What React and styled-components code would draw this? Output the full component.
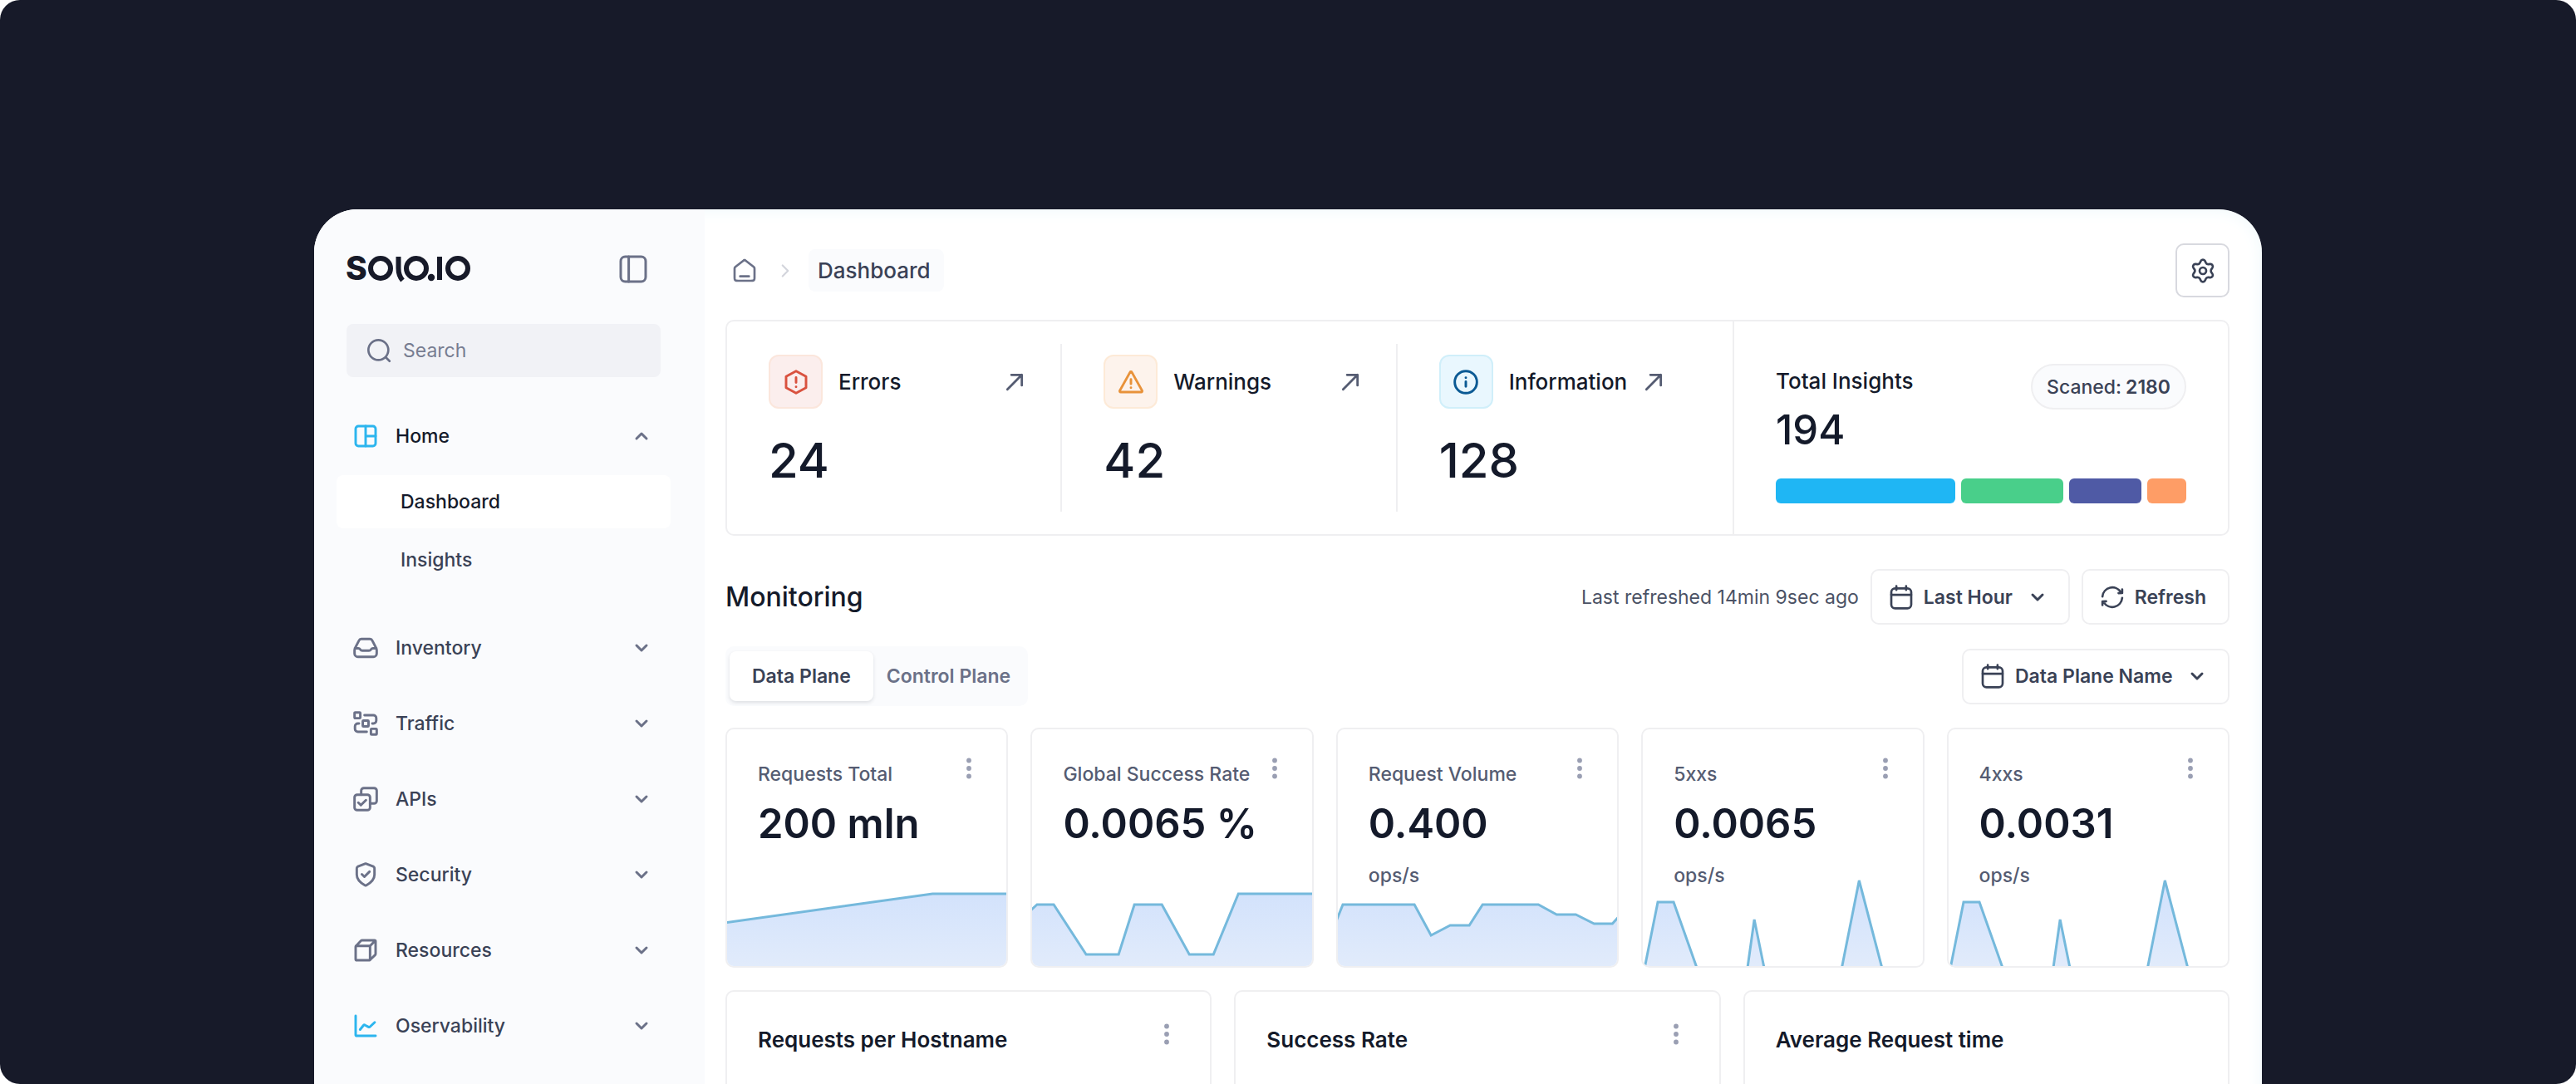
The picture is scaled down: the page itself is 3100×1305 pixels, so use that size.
import React, { useState } from "react"
import styled, { createGlobalStyle, css } from "styled-components"

const COLOR = {
  night: "#171a29",
  ink: "#141a2a",
  text: "#3a4256",
  soft: "#555c72",
  muted: "#6b7188",
  dots: "#9a9fb3",
  line: "#efeff1",
  side: "#fafbfd",
  brand: "#2cb5ee",
}

const GlobalStyle = createGlobalStyle`
  * {
    box-sizing: border-box;
  }

  html {
    background-color: #fff;
  }

  body {
    margin: 0;
    font-family: Inter, "Liberation Sans", sans-serif;
    font-size: 23px;
    color: ${COLOR.ink};
  }

  button,
  input,
  select {
    font: inherit;
    color: inherit;
    border: 0;
    background: none;
    padding: 0;
    margin: 0;
  }

  a {
    color: inherit;
    text-decoration: none;
  }

  h2,
  h3,
  p {
    margin: 0;
  }
`

/* ---------- icons ---------- */

const Svg = styled.svg`
  display: block;
  flex: none;
  width: ${props => props.$size || 32}px;
  height: ${props => props.$size || 32}px;
  fill: none;
  stroke: currentColor;
  stroke-width: ${props => props.$weight || 2};
  stroke-linecap: round;
  stroke-linejoin: round;
`

const ICONS = {
  panel: (
    <>
      <rect x="2" y="2" width="20" height="20" rx="3.6" />
      <path d="M8.4 2v20" />
    </>
  ),
  search: (
    <>
      <circle cx="11.5" cy="11.5" r="9" />
      <path d="M18.4 18.4L21.6 21.6" />
    </>
  ),
  home: (
    <>
      <rect x="3" y="3" width="18" height="18" rx="2.4" />
      <path d="M12 3v18M12 12h9" />
    </>
  ),
  inventory: (
    <path d="M8.1 4h7.8c1.1 0 1.7.4 2.1 1.3l3.2 6.2c.5 1 .8 1.6.8 2.6V17a3 3 0 01-3 3H5a3 3 0 01-3-3v-2.9c0-1 .3-1.6.8-2.6L6 5.3C6.4 4.4 7 4 8.1 4zM2.3 12.4h3c.8 0 1.4.3 1.8.9.5.8 1 1.2 1.9 1.2h6c.9 0 1.4-.4 1.9-1.2.4-.6 1-.9 1.8-.9h3" />
  ),
  traffic: (
    <>
      <rect x="2" y="2" width="5.2" height="5.2" rx=".6" />
      <rect x="9.4" y="9.4" width="5.2" height="5.2" rx=".6" />
      <rect x="16.8" y="16.8" width="5.2" height="5.2" rx=".6" />
      <path d="M11 4.5h8a2.6 2.6 0 012.6 2.6v2.3A2.6 2.6 0 0119 12h-1M13 19.5H5a2.6 2.6 0 01-2.6-2.6v-2.3A2.6 2.6 0 015 12h1" />
    </>
  ),
  apis: (
    <>
      <rect x="2" y="8" width="14" height="14" rx="2.4" />
      <path d="M8 8V4.4A2.4 2.4 0 0110.4 2h9.2A2.4 2.4 0 0122 4.4v9.2a2.4 2.4 0 01-2.4 2.4H16M5.4 15.2l2.3 2.3 4.6-4.6" />
    </>
  ),
  security: (
    <path d="M8.6 11.6l2.3 2.3 4.6-4.6M20 12c0 4.908-5.354 8.478-7.302 9.615-.221.129-.332.194-.488.227a1.137 1.137 0 01-.42 0c-.156-.033-.267-.098-.488-.227C9.354 20.478 4 16.908 4 12V7.218c0-.8 0-1.2.13-1.543a2 2 0 01.548-.79c.276-.242.65-.383 1.398-.663l5.362-2.01c.208-.079.312-.118.419-.133a1 1 0 01.286 0c.107.015.21.054.419.132l5.362 2.011c.748.28 1.123.42 1.398.663a2 2 0 01.547.79c.131.343.131.743.131 1.543V12z" />
  ),
  resources: (
    <>
      <rect x="3" y="8" width="13" height="13" rx="1" />
      <path d="M3.4 8L7.8 3.4a1.4 1.4 0 011-.4H20a1 1 0 011 1v11.2a1.4 1.4 0 01-.4 1L16 20.6M16 8l4.7-4.7" />
    </>
  ),
  chart: (
    <path d="M3 3v17a1 1 0 001 1h17M7 15.4l3-3.8a1.2 1.2 0 011.6-.2l3 1.6a1.2 1.2 0 001.4-.2l4.2-4" />
  ),
  down: <path d="M6 9l6 6 6-6" />,
  up: <path d="M18 15l-6-6-6 6" />,
  right: <path d="M9 18l6-6-6-6" />,
  house: (
    <path d="M8 17h8M11.018 2.764L4.235 8.039c-.453.353-.68.53-.843.75a2 2 0 00-.318.65C3 9.704 3 9.991 3 10.565V17.8c0 1.12 0 1.68.218 2.108a2 2 0 00.874.874C4.52 21 5.08 21 6.2 21h11.6c1.12 0 1.68 0 2.108-.218a2 2 0 00.874-.874C21 19.48 21 18.92 21 17.8v-7.235c0-.574 0-.861-.074-1.126a2 2 0 00-.318-.65c-.163-.22-.39-.397-.843-.75l-6.783-5.275c-.351-.273-.527-.41-.72-.462a1 1 0 00-.523 0c-.194.052-.37.189-.721.462z" />
  ),
  error: (
    <path d="M12 2l9 4.9v10.2L12 22l-9-4.9V6.9zM12 7.8v4.6M12 16.3v.1" />
  ),
  warning: (
    <path d="M12 2.6a.9.9 0 01.8.5L22 19.6a.9.9 0 01-.8 1.4H2.8a.9.9 0 01-.8-1.4L11.2 3.1a.9.9 0 01.8-.5zM12 9.6v4M12 17v.1" />
  ),
  info: (
    <>
      <circle cx="12" cy="12" r="10" />
      <path d="M12 11.6V16M12 8v.1" />
    </>
  ),
  arrow: <path d="M4 20L20 4M8.4 4H20v11.6" />,
  gear: (
    <>
      <path d="M9.395 19.371l.584 1.315a2.213 2.213 0 004.044 0l.585-1.315a2.426 2.426 0 012.47-1.423l1.43.152a2.212 2.212 0 002.022-3.502l-.847-1.163a2.43 2.43 0 01-.46-1.435c0-.513.162-1.013.464-1.428l.847-1.163a2.212 2.212 0 00-2.022-3.502l-1.43.152a2.426 2.426 0 01-2.47-1.43l-.589-1.315a2.213 2.213 0 00-4.044 0l-.584 1.315a2.426 2.426 0 01-2.47 1.43l-1.436-.152a2.212 2.212 0 00-2.022 3.502l.847 1.163a2.43 2.43 0 010 2.855l-.847 1.163a2.212 2.212 0 002.022 3.502l1.431-.152a2.426 2.426 0 012.475 1.431z" />
      <circle cx="12" cy="12" r="3" />
    </>
  ),
  calendar: (
    <>
      <rect x="3" y="4" width="18" height="18" rx="3.4" />
      <path d="M3 9.8h18M7.6 2v3.4M16.4 2v3.4" />
    </>
  ),
  refresh: (
    <path d="M3.1 11.3A9 9 0 0119.7 7.4M20.9 12.7A9 9 0 014.3 16.6M20.9 4.9v3.3l-3.3.1M3.1 19.1v-3.3l3.3-.1" />
  ),
}

const Icon = ({ name, size, weight }) => (
  <Svg viewBox="0 0 24 24" $size={size} $weight={weight} aria-hidden="true">
    {ICONS[name]}
  </Svg>
)

const LogoSvg = styled.svg`
  display: block;
  overflow: visible;
  width: 150px;
  height: 36px;
  fill: ${COLOR.night};

  text {
    font-size: 39px;
    font-weight: 800;
  }

  .ring {
    fill: none;
    stroke: ${COLOR.night};
    stroke-width: 6;
  }
`

const Logo = () => (
  <LogoSvg viewBox="0 0 150 36" role="img" aria-label="solo.io">
    <text x="-1" y="31">
      S
    </text>
    <circle className="ring" cx="41" cy="17" r="12" />
    <path className="ring" d="M62.5 3v14c0 6 1.5 10.5 5 14.500" />
    <circle className="ring" cx="84" cy="17" r="12" />
    <circle cx="102" cy="28" r="4.2" />
    <rect x="109" y="3" width="6" height="28" />
    <circle className="ring" cx="134" cy="17" r="12" />
  </LogoSvg>
)

/* ---------- shell ---------- */

const Page = styled.div`
  height: 100vh;
  overflow: hidden;
  padding: 252px 378px 0;
  border-radius: 24px;
  background-color: ${COLOR.night};
`

const Panel = styled.div`
  display: flex;
  overflow: hidden;
  border-radius: 52px 52px 0 0;
  background-color: #fff;
  box-shadow: inset 0 0 20px #eef8fb;
`

/* ---------- sidebar ---------- */

const Sidebar = styled.aside`
  flex: none;
  width: 470px;
  padding: 55px 53px 0 39px;
  background-color: ${COLOR.side};
`

const SidebarHead = styled.div`
  display: flex;
  align-items: center;
  justify-content: space-between;
  height: 34px;
  padding-right: 15px;
  margin-bottom: 49px;
`

const IconButton = styled.button`
  display: flex;
  color: ${COLOR.muted};
`

const SearchField = styled.label`
  display: flex;
  align-items: center;
  gap: 13px;
  height: 64px;
  padding: 0 23px;
  margin-bottom: 39px;
  border-radius: 8px;
  background-color: #f1f2f6;
  color: ${COLOR.muted};

  input {
    flex: 1;
    min-width: 0;
    outline: 0;

    &::placeholder {
      color: #777d91;
      opacity: 1;
    }
  }
`

const Nav = styled.nav`
  display: flex;
  flex-direction: column;
  gap: 27px;
`

const NavButton = styled.button`
  display: flex;
  align-items: center;
  gap: 20px;
  width: 100%;
  height: 64px;
  padding: 0 11px 0 7px;
  font-weight: 500;
  text-align: left;
  color: ${props => (props.$open ? COLOR.ink : COLOR.text)};

  span {
    flex: 1;
  }

  svg {
    color: ${COLOR.muted};
  }

  svg:first-child {
    color: ${props => (props.$bright ? COLOR.brand : COLOR.muted)};
  }
`

const SubNav = styled.div`
  display: flex;
  flex-direction: column;
  gap: 6px;
  margin: 15px -12px;
`

const SubLink = styled.a`
  display: flex;
  align-items: center;
  height: 64px;
  padding: 0 77px;
  border-radius: 8px;
  font-weight: 500;
  color: ${COLOR.text};

  ${props =>
    props.$active &&
    css`
      color: ${COLOR.ink};
      background-color: #fff;
    `}
`

/* ---------- main column ---------- */

const Main = styled.main`
  flex: 1;
  min-width: 0;
  padding: 41px 39px 0 25px;
`

const Row = styled.div`
  display: flex;
  align-items: center;
  justify-content: space-between;
  margin-bottom: ${props => props.$after}px;
`

const Crumbs = styled.nav`
  display: flex;
  align-items: center;
  padding-left: 7px;
  color: ${COLOR.muted};

  > svg {
    margin: 0 15px 0 20px;
    color: #d3d5dc;
  }

  strong {
    display: flex;
    align-items: center;
    height: 51px;
    padding: 0 16px 0 11px;
    border-radius: 8px;
    background-color: ${COLOR.side};
    font-size: 26px;
    font-weight: 500;
    color: ${COLOR.text};
  }
`

const SettingsButton = styled.button`
  display: flex;
  align-items: center;
  justify-content: center;
  width: 65px;
  height: 65px;
  border: 2px solid #d8d9df;
  border-radius: 10px;
  color: ${COLOR.text};
`

const Insights = styled.section`
  display: flex;
  height: 260px;
  margin-bottom: 40px;
  border: 2px solid ${COLOR.line};
  border-radius: 10px;
`

const Levels = styled.div`
  flex: 1;
  display: grid;
  grid-template-columns: repeat(3, 1fr);
  padding: 27px 0;
`

const Level = styled.div`
  padding: 13px 42px 0 50px;
  border-right: 2px solid ${COLOR.line};

  &:last-child {
    border-right: 0;
  }

  &:last-child a {
    margin-left: 0;
  }
`

const LevelHead = styled.div`
  display: flex;
  align-items: center;
  gap: 19px;
  margin-bottom: 26px;
  font-size: 26px;
  font-weight: 500;

  a {
    margin: 0 0 0 auto;
    color: ${COLOR.soft};
  }
`

const TONES = {
  error: ["#d9523f", "#fbeeed", "#fbe6dc"],
  warning: ["#e8923a", "#fdf3ec", "#fdead7"],
  info: ["#0b5a94", "#e9f7fe", "#d0effa"],
}

const Tile = styled.span`
  display: flex;
  align-items: center;
  justify-content: center;
  width: 65px;
  height: 65px;
  border: 2px solid ${props => TONES[props.$tone][2]};
  border-radius: 12px;
  color: ${props => TONES[props.$tone][0]};
  background-color: ${props => TONES[props.$tone][1]};
`

const LevelCount = styled.p`
  font-size: 58px;
  line-height: 72px;
  font-weight: 500;
`

const Totals = styled.div`
  width: 596px;
  padding: 51px 50px 0;
  border-left: 2px solid ${COLOR.line};
`

const TotalsHead = styled.div`
  display: flex;
  align-items: flex-start;
  justify-content: space-between;
  margin-bottom: 20px;

  h3 {
    font-size: 26px;
    line-height: 42px;
    font-weight: 500;
  }

  p {
    font-size: 49px;
    line-height: 76px;
    font-weight: 500;
  }
`

const Pill = styled.span`
  display: flex;
  align-items: center;
  gap: 5px;
  height: 55px;
  padding: 0 17px;
  border: 2px solid ${COLOR.line};
  border-radius: 28px;
  background-color: #fafbfd;
  font-weight: 500;
  color: ${COLOR.text};

  b {
    font-weight: 600;
  }
`

const Split = styled.div`
  display: flex;
  gap: 7px;
  height: 30px;
`

const SplitPart = styled.span`
  flex: ${props => props.$share} 0 0;
  border-radius: 6px;
  background-color: ${props => props.$color};
`

const Title = styled.h2`
  font-size: 32px;
  font-weight: 500;
`

const Actions = styled.div`
  display: flex;
  align-items: center;
  gap: 14px;
  color: #4b5265;
`

const outlined = css`
  display: flex;
  align-items: center;
  gap: 11px;
  height: 67px;
  border: 2px solid ${COLOR.line};
  border-radius: 10px;
  background-color: #fff;
  font-weight: 600;
  color: ${COLOR.text};
`

const SelectBox = styled.label`
  ${outlined}
  padding: 0 25px 0 19px;

  select {
    appearance: none;
    outline: 0;
    padding-right: 6px;
  }
`

const RefreshButton = styled.button`
  ${outlined}
  padding: 0 26px 0 19px;
`

const Tabs = styled.div`
  display: flex;
  height: 72px;
  padding: 6px 5px;
  border-radius: 10px;
  background-color: ${COLOR.side};
`

const Tab = styled.button`
  padding: 0 16px;
  border-radius: 8px;
  font-weight: 600;
  color: ${COLOR.muted};

  ${props =>
    props.$active &&
    css`
      padding: 0 27px;
      color: ${COLOR.text};
      background-color: #fff;
      box-shadow: 0 2px 4px rgba(16, 24, 40, 0.12);
    `}
`

const Grid = styled.section`
  display: grid;
  grid-template-columns: repeat(${props => props.$columns}, 1fr);
  gap: 27px;
  margin-bottom: 27px;
`

const Card = styled.article`
  display: grid;
  overflow: hidden;
  min-height: ${props => props.$height}px;
  border: 2px solid ${COLOR.line};
  border-radius: 10px;
  background-color: #fff;
`

const CardBody = styled.div`
  grid-area: 1 / 1;
  z-index: 1;
  padding: 31px 36px 0 37px;
`

const CardHead = styled.div`
  display: flex;
  align-items: flex-start;
  justify-content: space-between;

  h3 {
    padding-top: 9px;
    font-size: 23px;
    line-height: 28px;
    font-weight: 500;
    color: ${COLOR.soft};
  }
`

const WideHead = styled(CardHead)`
  padding: 4px 7px 0 0;

  h3 {
    padding-top: 5px;
    font-size: 26px;
    line-height: 36px;
    font-weight: 600;
    color: ${COLOR.ink};
  }
`

const MenuButton = styled.button`
  display: flex;
  padding: 3px 6px;
  fill: ${COLOR.dots};
`

const Amount = styled.p`
  margin: 14px 0 16px;
  font-size: 49px;
  line-height: 64px;
  font-weight: 600;
`

const Unit = styled.p`
  line-height: 28px;
  font-weight: 500;
  color: ${COLOR.soft};
`

const ChartSvg = styled.svg`
  grid-area: 1 / 1;
  align-self: end;
  display: block;
  width: 100%;
  height: 110px;

  .line {
    fill: none;
    stroke: #75b9dc;
    stroke-width: 3;
    vector-effect: non-scaling-stroke;
  }
`

const Chart = ({ points }) => (
  <ChartSvg viewBox="0 0 336 110" preserveAspectRatio="none" aria-hidden="true">
    <defs>
      <linearGradient
        id="area"
        gradientUnits="userSpaceOnUse"
        x1="0"
        y1="0"
        x2="0"
        y2="110"
      >
        <stop offset="0" stopColor="#cfe0fc" />
        <stop offset="1" stopColor="#e1ebfb" />
      </linearGradient>
    </defs>
    <polygon points={`-4,118 ${points} 340,118`} fill="url(#area)" />
    <polyline className="line" points={points} />
  </ChartSvg>
)

const Menu = ({ label }) => (
  <MenuButton type="button" aria-label={`${label} menu`}>
    <svg width="6" height="26" viewBox="0 0 6 26">
      <circle cx="3" cy="3.5" r="2.9" />
      <circle cx="3" cy="13" r="2.9" />
      <circle cx="3" cy="22.5" r="2.9" />
    </svg>
  </MenuButton>
)

/* ---------- data ---------- */

const NAV = [
  ["Inventory", "inventory"],
  ["Traffic", "traffic"],
  ["APIs", "apis"],
  ["Security", "security"],
  ["Resources", "resources"],
  ["Oservability", "chart"],
]

const LEVELS = [
  { label: "Errors", count: 24, tone: "error" },
  { label: "Warnings", count: 42, tone: "warning" },
  { label: "Information", count: 128, tone: "info" },
]

const SPLIT = [
  [216, "#1fb6f4"],
  [124, "#49cf8a"],
  [87, "#4f5aa5"],
  [47, "#fe9d66"],
]

// peaks run below the drawing so that only their sides are stroked
const PEAKS =
  "1,118 18,33 37,33 67,118 125,118 134,54 147,118 238,118 260,7 289,118"

const METRICS = [
  { label: "Requests Total", value: "200 mln", points: "-4,58 247,23 340,23" },
  {
    label: "Global Success Rate",
    value: "0.0065 %",
    points:
      "-4,45 6,36 26,36 65,96 104,96 123,36 156,36 189,96 218,96 248,23 340,23",
  },
  {
    label: "Request Volume",
    value: "0.400",
    unit: "ops/s",
    points:
      "-4,61 6,36 92,36 112,73 135,61 158,61 174,36 241,36 263,48 286,48 308,59 330,59 340,48",
  },
  { label: "5xxs", value: "0.0065", unit: "ops/s", points: PEAKS },
  { label: "4xxs", value: "0.0031", unit: "ops/s", points: PEAKS },
]

const REPORTS = [
  { label: "Requests per Hostname", menu: true },
  { label: "Success Rate", menu: true },
  { label: "Average Request time" },
]

const App = () => {
  const [open, setOpen] = useState(true)
  const [tab, setTab] = useState("Data Plane")

  return (
    <Page>
      <GlobalStyle />
      <Panel>
        <Sidebar>
          <SidebarHead>
            <Logo />
            <IconButton type="button" aria-label="Toggle sidebar">
              <Icon name="panel" size={36} />
            </IconButton>
          </SidebarHead>
          <SearchField>
            <Icon name="search" />
            <input type="text" placeholder="Search" aria-label="Search" />
          </SearchField>
          <Nav>
            <div>
              <NavButton
                type="button"
                $open
                $bright
                aria-expanded={open}
                onClick={() => setOpen(!open)}
              >
                <Icon name="home" weight={2.2} />
                <span>Home</span>
                <Icon name={open ? "up" : "down"} size={24} weight={3} />
              </NavButton>
              {open && (
                <SubNav>
                  <SubLink href="#dashboard" $active>
                    Dashboard
                  </SubLink>
                  <SubLink href="#insights">Insights</SubLink>
                </SubNav>
              )}
            </div>
            {NAV.map(([label, icon]) => (
              <NavButton type="button" key={label} $bright={icon === "chart"}>
                <Icon name={icon} weight={2.2} />
                <span>{label}</span>
                <Icon name="down" size={24} weight={3} />
              </NavButton>
            ))}
          </Nav>
        </Sidebar>

        <Main>
          <Row $after={27}>
            <Crumbs>
              <a href="#home" aria-label="Home">
                <Icon name="house" />
              </a>
              <Icon name="right" size={26} />
              <strong>Dashboard</strong>
            </Crumbs>
            <SettingsButton type="button" aria-label="Settings">
              <Icon name="gear" />
            </SettingsButton>
          </Row>

          <Insights>
            <Levels>
              {LEVELS.map(({ label, count, tone }) => (
                <Level key={label}>
                  <LevelHead>
                    <Tile $tone={tone}>
                      <Icon name={tone} weight={2.2} />
                    </Tile>
                    <span>{label}</span>
                    <a href={`#${tone}`} aria-label={`Open ${label}`}>
                      <Icon name="arrow" size={26} weight={2.6} />
                    </a>
                  </LevelHead>
                  <LevelCount>{count}</LevelCount>
                </Level>
              ))}
            </Levels>
            <Totals>
              <TotalsHead>
                <div>
                  <h3>Total Insights</h3>
                  <p>194</p>
                </div>
                <Pill>
                  Scaned: <b>2180</b>
                </Pill>
              </TotalsHead>
              <Split>
                {SPLIT.map(([share, color]) => (
                  <SplitPart key={color} $share={share} $color={color} />
                ))}
              </Split>
            </Totals>
          </Insights>

          <Row $after={26}>
            <Title>Monitoring</Title>
            <Actions>
              <span>Last refreshed 14min 9sec ago</span>
              <SelectBox>
                <Icon name="calendar" />
                <select aria-label="Time range">
                  <option>Last Hour</option>
                </select>
                <Icon name="down" size={24} weight={3} />
              </SelectBox>
              <RefreshButton type="button">
                <Icon name="refresh" />
                Refresh
              </RefreshButton>
            </Actions>
          </Row>

          <Row $after={26}>
            <Tabs role="tablist">
              {["Data Plane", "Control Plane"].map(name => (
                <Tab
                  type="button"
                  role="tab"
                  key={name}
                  aria-selected={tab === name}
                  $active={tab === name}
                  onClick={() => setTab(name)}
                >
                  {name}
                </Tab>
              ))}
            </Tabs>
            <SelectBox>
              <Icon name="calendar" />
              <select aria-label="Data plane">
                <option>Data Plane Name</option>
              </select>
              <Icon name="down" size={24} weight={3} />
            </SelectBox>
          </Row>

          <Grid $columns={5}>
            {METRICS.map(({ label, value, unit, points }) => (
              <Card key={label} $height={289}>
                <Chart points={points} />
                <CardBody>
                  <CardHead>
                    <h3>{label}</h3>
                    <Menu label={label} />
                  </CardHead>
                  <Amount>{value}</Amount>
                  {unit && <Unit>{unit}</Unit>}
                </CardBody>
              </Card>
            ))}
          </Grid>

          <Grid $columns={3}>
            {REPORTS.map(({ label, menu }) => (
              <Card key={label} $height={420}>
                <CardBody>
                  <WideHead>
                    <h3>{label}</h3>
                    {menu && <Menu label={label} />}
                  </WideHead>
                </CardBody>
              </Card>
            ))}
          </Grid>
        </Main>
      </Panel>
    </Page>
  )
}

export default App
